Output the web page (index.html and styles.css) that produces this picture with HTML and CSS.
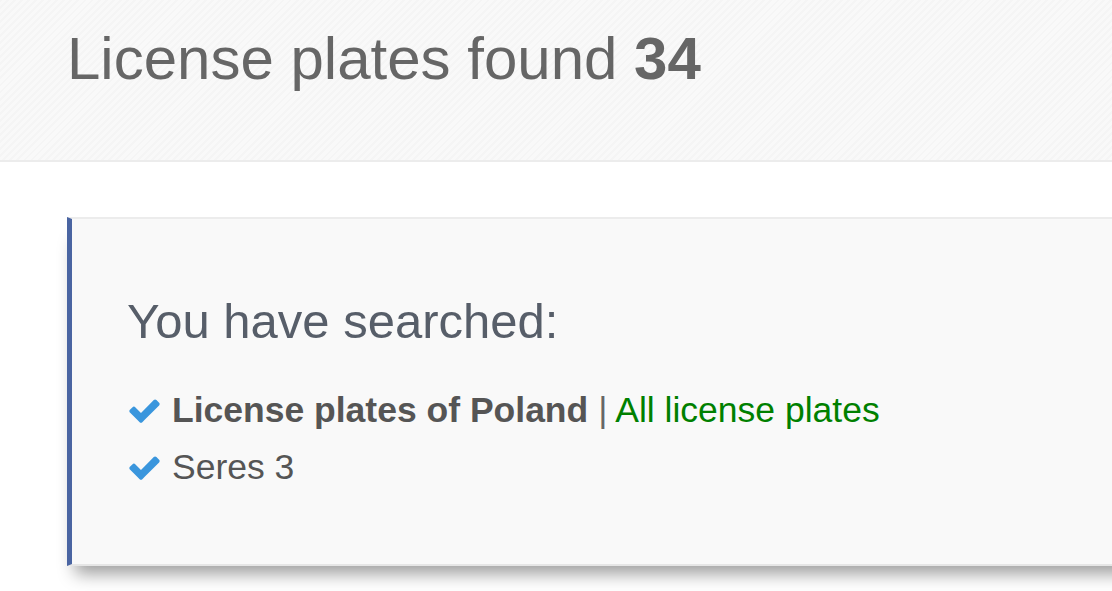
FILE: index.html
```html
<!DOCTYPE html>
<html>
<head>
<meta charset="utf-8">
<link rel="stylesheet" href="styles.css">
</head>
<body>
<header class="page-header">
  <h1 class="title">License plates found <b>34</b></h1>
</header>
<main class="main">
  <section class="search-box">
    <h2 class="search-title">You have searched:</h2>
    <ul class="criteria">
      <li class="criterion">
        <svg class="check" viewBox="0 0 1792 1792"><path d="M1671 566q0 40-28 68l-724 724-136 136q-28 28-68 28t-68-28l-136-136-362-362q-28-28-28-68t28-68l136-136q28-28 68-28t68 28l294 295 656-657q28-28 68-28t68 28l136 136q28 28 28 68z"/></svg>
        <span><b class="strong">License plates of Poland</b> <span class="sep">|</span> <a class="link" href="#">All license plates</a></span>
      </li>
      <li class="criterion">
        <svg class="check" viewBox="0 0 1792 1792"><path d="M1671 566q0 40-28 68l-724 724-136 136q-28 28-68 28t-68-28l-136-136-362-362q-28-28-28-68t28-68l136-136q28-28 68-28t68 28l294 295 656-657q28-28 68-28t68 28l136 136q28 28 28 68z"/></svg>
        <span>Seres 3</span>
      </li>
    </ul>
  </section>
</main>
</body>
</html>
```

FILE: styles.css
```css
html, body {
  margin: 0;
  padding: 0;
  overflow: hidden;
  background: #fff;
  font-family: "Liberation Sans", Arial, sans-serif;
}

.page-header {
  height: 162px;
  box-sizing: border-box;
  border-bottom: 2px solid #ececec;
  background-color: #f8f8f8;
  background-image: repeating-linear-gradient(-45deg, #f9f9f9 0px, #f9f9f9 3px, #f5f5f5 3px, #f5f5f5 5px);
  padding: 0 0 0 67px;
}

.title {
  margin: 0;
  padding-top: 22px;
  font-size: 60px;
  line-height: 74px;
  font-weight: normal;
  color: #666;
}

.title b {
  font-weight: bold;
}

.main {
  padding: 55px 0 40px 67px;
}

.search-box {
  width: 1200px;
  box-sizing: border-box;
  min-height: 349px;
  background: #f9f9f9;
  border-top: 2px solid #ececec;
  border-bottom: 2px solid #e6e6e6;
  border-left: 5px solid #4a65a2;
  padding: 72px 0 40px 55px;
  box-shadow: 0 16px 16px -8px rgba(0, 0, 0, 0.38);
}

.search-title {
  margin: 0;
  font-size: 49px;
  line-height: 60px;
  font-weight: normal;
  color: #575e69;
}

.criteria {
  list-style: none;
  margin: 31px 0 0;
  padding: 0;
}

.criterion {
  display: flex;
  align-items: center;
  gap: 10px;
  font-size: 35.5px;
  line-height: 57px;
  color: #555;
}

.check {
  width: 35px;
  height: 35px;
  fill: #3a96dd;
  margin-left: 0;
  flex: none;
}

.strong {
  font-weight: bold;
}

.sep {
  color: #666;
}

.link {
  color: #008000;
  text-decoration: none;
}
```
